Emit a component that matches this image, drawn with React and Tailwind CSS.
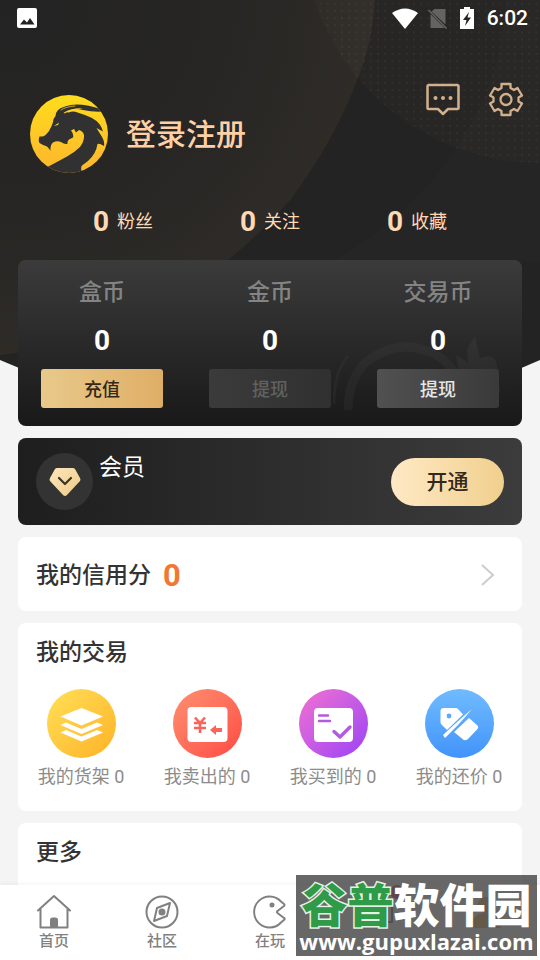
const stats = [
  { label: "粉丝", value: 0 },
  { label: "关注", value: 0 },
  { label: "收藏", value: 0 },
];

const wallets = [
  {
    label: "盒币",
    value: 0,
    action: "充值",
    className: "bg-linear-to-r from-[#e8c98a] to-[#dfae66] text-[#33291a]",
  },
  {
    label: "金币",
    value: 0,
    action: "提现",
    disabled: true,
    className: "bg-linear-to-r from-[#3b3b3b] to-[#303030] text-[#616161]",
  },
  {
    label: "交易币",
    value: 0,
    action: "提现",
    className: "bg-linear-to-r from-[#515151] to-[#3a3a3a] text-[#e6e6e6]",
  },
];

const HeaderBackdrop = () => (
  <svg
    className="absolute inset-x-0 top-0 h-[430px] w-full"
    viewBox="0 0 540 430"
    preserveAspectRatio="none"
    aria-hidden="true"
  >
    <defs>
      <radialGradient id="disc" gradientUnits="userSpaceOnUse" cx="5" cy="-10" r="372">
        <stop offset="0" stopColor="#232323" />
        <stop offset="0.6" stopColor="#272624" />
        <stop offset="1" stopColor="#2f2c28" />
      </radialGradient>
      <pattern id="dots" width="7.2" height="7.2" patternUnits="userSpaceOnUse">
        <circle cx="3.6" cy="3.6" r="0.9" fill="#fff" fillOpacity="0.06" />
      </pattern>
    </defs>
    <path d="M0 0H540V360Q270 480 0 360Z" fill="#232323" />
    <path d="M506 0Q502 70 470 125Q420 215 330 262H540V0Z" fill="#fff" fillOpacity="0.01" />
    <path
      d="M375 0Q372 45 357 80Q335 140 290 200Q262 232 228 260Q130 340 0 355V0Z"
      fill="url(#disc)"
    />
    <circle cx="540" cy="-75" r="238" fill="#c8a070" fillOpacity="0.03" />
    <circle cx="540" cy="-75" r="238" fill="url(#dots)" />
  </svg>
);

const StatusBar = () => (
  <div className="flex h-9 items-center justify-between px-3">
    <svg className="ml-1 size-6" viewBox="0 0 24 24" aria-hidden="true">
      <rect x="1" y="2" width="20" height="20" rx="2" fill="#fff" />
      <path d="M4 18.500L8 13.500L11 16.500L14 12L18.500 18.500Z" fill="#232323" />
    </svg>
    <div className="flex items-center pt-0.5 text-white">
      <svg className="h-6 w-7" viewBox="0 0 28 24" aria-hidden="true">
        <path d="M1 6Q14 -3 27 6L14 22Z" fill="#fff" />
      </svg>
      <svg className="ml-2 size-6" viewBox="0 0 24 24" aria-hidden="true">
        <path d="M7.500 2H18.500V17.500L4.500 4.500ZM3.500 7L17.500 21H3.500Z" fill="#646361" />
        <path d="M1.500 3L19.500 21.500" stroke="#646361" strokeWidth="1.600" />
      </svg>
      <svg className="ml-2 h-6 w-4" viewBox="0 0 16 24" aria-hidden="true">
        <path d="M5 0H11V2H15V22H1V2H5Z" fill="#fff" />
        <path d="M10 5L4 13H7.500L6 19L12 10.500H8.500Z" fill="#232323" />
      </svg>
      <span className="ml-3 text-[21px] font-medium">6:02</span>
    </div>
  </div>
);

const DragonAvatar = () => (
  <svg className="size-20 shrink-0" viewBox="0 0 80 80" aria-hidden="true">
    <defs>
      <linearGradient id="avatar" x1="0" y1="0" x2="0" y2="1">
        <stop offset="0" stopColor="#ffdc1c" />
        <stop offset="1" stopColor="#fdb52e" />
      </linearGradient>
      <clipPath id="avatarClip">
        <circle cx="40" cy="40" r="39" />
      </clipPath>
    </defs>
    <circle cx="40" cy="40" r="39" fill="url(#avatar)" />
    <g clipPath="url(#avatarClip)" fill="#313131">
      <path d="M10.500 42.500Q9 46 10.500 49Q14 51 18 52.500Q20 54 21.500 57Q21 51 24 48.500Q28 46.500 32 48Q35 50.500 38.500 50Q38 47 40 45.500L44 43.500Q45 40 42 36.500L45 35L47 38.500L50 36Q54 37 55 41Q55.500 47 51 53Q46 58 38 62.500Q28 68 18.500 73L14 80H53.500Q51 74 53 71.500L59 67Q67 60 68.500 50Q70 49 75 52Q76 47 71.500 40.500L67.500 34L74 37.500Q72 29 63 24Q57 21 50 19Q42 16 35 19.500Q33 17 35 13Q27 15 26.500 22Q24.500 24 24 28Q23 32 20 37Q16 42.500 13 42.500Z" />
      <path d="M27 23Q30 12 42 11Q54 9 74 16Q80 18 82 17Q66 19 54 16Q42 13 33 20Z" />
    </g>
    <g fill="none" stroke="#ffd321" strokeLinecap="round">
      <path d="M37 18Q44 13.500 54 14.500Q46 15 40 18.500Z" fill="#ffd321" stroke="none" />
      <path d="M32 16Q37 12.500 46 12" strokeWidth="0.700" />
      <path d="M25 32L30 28.500L29 31Z" fill="#ffd321" stroke="none" />
    </g>
  </svg>
);

const Diamond = () => (
  <svg className="size-8" viewBox="0 0 32 32" aria-hidden="true">
    <defs>
      <linearGradient id="gem" x1="0" y1="0" x2="1" y2="1">
        <stop offset="0" stopColor="#ffe7bd" />
        <stop offset="1" stopColor="#ebcb85" />
      </linearGradient>
    </defs>
    <path
      d="M8 2H24Q25 2 26 3L31 12Q32 14 31 15L18 29Q16 31 14 29L1 15Q0 14 1 12L6 3Q7 2 8 2Z"
      fill="url(#gem)"
    />
    <path d="M10 12L16 18L22 12" fill="none" stroke="#3c3426" strokeWidth="2.200" strokeLinecap="round" strokeLinejoin="round" />
  </svg>
);

const ShelfIcon = () => (
  <svg className="size-full" viewBox="0 0 69 69" fill="#fff" aria-hidden="true">
    <path d="M34.500 19L56 27.500L34.500 36.500L13.500 27.500Z" />
    <path d="M13.500 36L19 33.500L34.500 40L50 33.500L56 36L34.500 45Z" />
    <path d="M13.500 43.500L19 41L34.500 47.500L50 41L56 43.500L34.500 52.500Z" />
  </svg>
);

const SoldIcon = () => (
  <svg className="size-full" viewBox="0 0 69 69" aria-hidden="true">
    <rect x="14.500" y="18" width="40" height="35" rx="4" fill="#fff" />
    <g fill="none" stroke="#f8655a" strokeWidth="2.600">
      <path d="M22 28.500L27 34L32 28.500M27 33V44M21 34H33M21 39H33" />
    </g>
    <path d="M37 41L43 36V39H49V43H43V46Z" fill="#f8655a" />
  </svg>
);

const BoughtIcon = () => (
  <svg className="size-full" viewBox="0 0 69 69" aria-hidden="true">
    <rect x="15" y="19" width="39" height="34" rx="4" fill="#fff" />
    <g fill="none" stroke="#b45ae0" strokeLinecap="round" strokeLinejoin="round">
      <path d="M20 26.500H29M20 32H31" strokeWidth="2.400" />
      <path d="M35 42.500L41 48L51 38" strokeWidth="3.400" />
    </g>
  </svg>
);

const BidIcon = () => (
  <svg className="size-full" viewBox="0 0 69 69" aria-hidden="true">
    <path d="M19 19H31Q32 19 33 20L38 25.500L22 41L16 35Q15.500 34 15.500 33V22Q15.500 19 19 19Z" fill="#fff" />
    <circle cx="24" cy="27" r="2.400" fill="#5daafd" />
    <path d="M44 29L52.500 36.500Q54 38 52.500 40L43 50Q40 52.500 37.500 50L29 43Z" fill="#fff" />
    <path d="M47 20Q34 31 18 46L20 49Q34 36 47 20Z" fill="#fff" />
  </svg>
);

const trades = [
  { label: "我的货架", count: 0, Icon: ShelfIcon, className: "bg-linear-to-br from-[#ffe056] to-[#fdb223]" },
  { label: "我卖出的", count: 0, Icon: SoldIcon, className: "bg-linear-to-br from-[#fd8f70] to-[#fe4744]" },
  { label: "我买到的", count: 0, Icon: BoughtIcon, className: "bg-linear-to-br from-[#f46fd0] to-[#9c3df5]" },
  { label: "我的还价", count: 0, Icon: BidIcon, className: "bg-linear-to-b from-[#70bbfe] to-[#4293fb]" },
];

const tabs = [
  {
    label: "首页",
    icon: (
      <>
        <path d="M2 16.500L18 2L34 16.500M4.500 15V33.500H31.500V15" />
        <path d="M15 33V26Q15 24.500 16.500 24.500H19.500Q21 24.500 21 26V33Z" fill="currentColor" />
      </>
    ),
  },
  {
    label: "社区",
    icon: (
      <>
        <circle cx="18" cy="18" r="15.500" />
        <path d="M26 9L23 22L10 27L13 14Z" />
        <circle cx="18" cy="18" r="2.500" fill="currentColor" />
      </>
    ),
  },
  {
    label: "在玩",
    icon: (
      <>
        <path d="M29 7.500A15.500 15.500 0 1 0 29 28.500L32.500 25.500Q33 24.500 32 24L25.500 19Q24.500 18 25.500 17L32 12Q33 11 32 10Z" />
        <circle cx="20" cy="11" r="1.500" fill="currentColor" />
      </>
    ),
  },
  {
    name: "消息",
    dot: true,
    icon: <path d="M4 6H32V28H22L18 32L14 28H4Z" />,
  },
  {
    name: "我的",
    icon: (
      <g fill="#f0b860" stroke="#f0b860">
        <circle cx="18" cy="11" r="7" />
        <path d="M4 33Q5 20 18 20Q31 20 32 33Z" />
      </g>
    ),
  },
];

const SiteBadge = () => (
  <div className="pointer-events-none absolute right-[3px] bottom-1 flex h-[81px] w-[241px] flex-col items-center overflow-hidden bg-[#464646]/82 text-white">
    <p className="mt-2 text-[46px] leading-[46px] font-black whitespace-nowrap">
      <span className="text-[#2f9a48] [paint-order:stroke_fill] [-webkit-text-stroke:3px_#e4f2e4]">谷普</span>
      软件园
    </p>
    <p className="font-['Open_Sans',sans-serif] text-[22px] leading-6 font-bold whitespace-nowrap">
      www.gupuxlazai.com
    </p>
  </div>
);

const App = () => {
  return (
    <div className="relative flex min-h-screen flex-col bg-[#f4f4f4] font-[Roboto,'Noto_Sans_CJK_SC',sans-serif] text-[#333]">
      <HeaderBackdrop />

      <header className="relative">
        <StatusBar />
        <div className="flex h-[152px] items-start justify-between pr-4 pl-[29px]">
          <div className="mt-[58px] flex items-center gap-[17px]">
            <DragonAvatar />
            <a href="#login" className="pt-0.5 text-[30px] leading-10 font-medium text-[#ffd0a6]">
              登录注册
            </a>
          </div>
          <div className="mt-[45px] flex gap-[27px] text-[#d2b08c]">
            <button type="button" aria-label="消息">
              <svg className="size-9" viewBox="0 0 36 36" fill="none" stroke="currentColor" strokeWidth="2.500" strokeLinejoin="round">
                <path d="M4 4H32Q33.500 4 33.500 5.500V27Q33.500 28 32 28H23L18 33L13 28H4Q2.500 28 2.500 27V5.500Q2.500 4 4 4Z" />
                <g fill="currentColor" stroke="none">
                  <circle cx="10.500" cy="17" r="2" />
                  <circle cx="18" cy="17" r="2" />
                  <circle cx="25.500" cy="17" r="2" />
                </g>
              </svg>
            </button>
            <button type="button" aria-label="设置">
              <svg className="size-9" viewBox="0 0 36 36" fill="none" stroke="currentColor" strokeWidth="2.300" strokeLinejoin="round">
                <path d="M13.500 3H22.500V7L26 9L29.500 7L34 14.500L30.500 16.500V20.500L34 22.500L29.500 30L26 28L22.500 30V34H13.500V30L10 28L6.500 30L2 22.500L5.500 20.500V16.500L2 14.500L6.500 7L10 9L13.500 7Z" />
                <circle cx="18" cy="18.500" r="5.500" />
              </svg>
            </button>
          </div>
        </div>

        <ul className="flex h-[72px] items-center justify-between px-[93px] pb-1 text-[#ffd9b4]">
          {stats.map((stat) => (
            <li key={stat.label} className="flex items-center gap-2">
              <span className="text-[28px] leading-8 font-bold">{stat.value}</span>
              <span className="text-lg">{stat.label}</span>
            </li>
          ))}
        </ul>
      </header>

      <main className="relative flex flex-1 flex-col gap-3 px-[18px]">
        <section className="relative grid grid-cols-3 overflow-hidden rounded-lg bg-linear-to-b from-[#3b3b3b] to-[#191919] pt-[17px] pb-[18px]">
          <svg className="absolute right-0 bottom-0 h-[100px] w-[190px]" viewBox="0 0 190 100" fill="none" aria-hidden="true">
            <path d="M16 84Q16 54 34 36Q64 14 92 24Q112 30 122 46" stroke="#fff" strokeOpacity="0.03" strokeWidth="9" />
            <path d="M2 78Q2 46 16 30" stroke="#fff" strokeOpacity="0.03" strokeWidth="3" />
            <path d="M124 29L136 36L135 23L143 10L148 32Q164 26 165 40L168 66H130Z" fill="#fff" fillOpacity="0.04" />
          </svg>
          {wallets.map((wallet) => (
            <div key={wallet.label} className="relative flex flex-col items-center">
              <h2 className="text-[23px] leading-8 font-medium text-[#848484]">{wallet.label}</h2>
              <p className="mt-4 text-[28px] leading-8 font-bold text-white">{wallet.value}</p>
              <button
                type="button"
                disabled={wallet.disabled}
                className={`mt-3 h-[39px] w-[122px] rounded-[3px] pt-0.5 text-lg font-medium ${wallet.className}`}
              >
                {wallet.action}
              </button>
            </div>
          ))}
        </section>

        <section className="flex h-[87px] items-center rounded-lg bg-linear-to-r from-[#1e1e1e] to-[#3c3c3c] px-[18px]">
          <div className="flex size-[57px] items-center justify-center rounded-full bg-[#333]">
            <Diamond />
          </div>
          <h2 className="ml-1.5 self-start pt-3.5 text-[23px] leading-8 text-white">会员</h2>
          <button
            type="button"
            className="ml-auto h-12 w-[113px] rounded-full bg-linear-to-r from-[#ffe9c5] to-[#f1d08d] pt-0.5 text-[21px] font-medium text-[#33291a]"
          >
            开通
          </button>
        </section>

        <a href="#credit" className="flex h-[74px] items-center rounded-lg bg-white px-[18px] pt-1">
          <h2 className="text-[23px] font-medium">我的信用分</h2>
          <span className="ml-3 text-[31px] font-bold text-[#f07833]">0</span>
          <svg className="ml-auto h-6 w-8" viewBox="0 0 32 24" fill="none" stroke="#ccc" strokeWidth="2" aria-hidden="true">
            <path d="M10 1L21 11L10 21" />
          </svg>
        </a>

        <section className="h-[188px] rounded-lg bg-white pt-3.5">
          <h2 className="px-[18px] text-[23px] leading-8 font-medium">我的交易</h2>
          <ul className="mt-5 grid grid-cols-4">
            {trades.map(({ label, count, Icon, className }) => (
              <li key={label}>
                <a href="#trades" className="flex flex-col items-center">
                  <span className={`size-[69px] rounded-full ${className}`}>
                    <Icon />
                  </span>
                  <span className="mt-[5px] text-lg text-[#8c8c8c]">
                    {label} {count}
                  </span>
                </a>
              </li>
            ))}
          </ul>
        </section>

        <section className="flex-1 rounded-t-lg bg-white px-[18px] pt-3.5">
          <h2 className="text-[23px] leading-8 font-medium">更多</h2>
        </section>
      </main>

      <nav className="relative h-[75px] bg-white shadow-[0_-1px_4px_rgba(0,0,0,0.05)]">
        <ul className="grid grid-cols-5 pt-2">
          {tabs.map((tab) => (
            <li key={tab.label ?? tab.name}>
              <a
                href="#tab"
                aria-label={tab.name}
                className="relative flex flex-col items-center text-[15px] leading-5 font-medium text-[#808080]"
              >
                <svg className="h-[38px] w-10" viewBox="-2 -1 40 38" fill="none" stroke="currentColor" strokeWidth="2" strokeLinejoin="round" strokeLinecap="round" aria-hidden="true">
                  {tab.icon}
                </svg>
                {tab.label}
                {tab.dot && <span className="absolute -top-2 right-7 size-3.5 rounded-full bg-[#f0404a]" />}
              </a>
            </li>
          ))}
        </ul>
        <SiteBadge />
      </nav>
    </div>
  );
};

export default App;
